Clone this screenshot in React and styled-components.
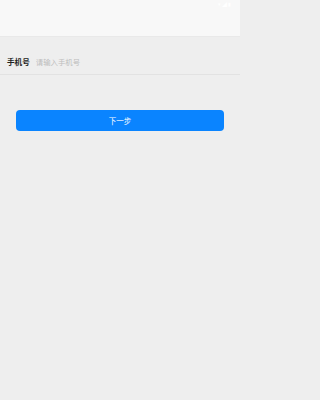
import React from "react";
import styled, { createGlobalStyle } from "styled-components";

const Global = createGlobalStyle`
  html, body { margin: 0; padding: 0; background: #eeeeee; }
  body { font-family: "Noto Sans CJK SC", "Noto Sans", sans-serif; }
  #root { min-height: 400px; }
`;

const Page = styled.div`
  width: 240px;
  min-height: 400px;
  background: #eeeeee;
  display: flex;
  flex-direction: column;
`;

const Header = styled.div`
  height: 37px;
  background: #f8f8f8;
  border-bottom: 1px solid #e9e9e9;
  box-sizing: border-box;
  display: flex;
  justify-content: flex-end;
  align-items: flex-start;
  padding: 1px 8px 0 0;
`;

const Status = styled.span`
  color: #ffffff;
  font-size: 5px;
  line-height: 6px;
  letter-spacing: 1px;
`;

const Row = styled.div`
  margin-top: 12px;
  height: 25px;
  display: flex;
  align-items: center;
  padding: 0 7px;
  border-bottom: 1px solid #e2e2e2;
  gap: 6px;
`;

const Label = styled.span`
  font-size: 7.6px;
  font-weight: 700;
  color: #222222;
  line-height: 1;
`;

const Input = styled.input`
  flex: 1;
  border: none;
  outline: none;
  background: transparent;
  padding: 0;
  font-family: "Noto Sans CJK SC", sans-serif;
  font-size: 7.4px;
  color: #333;
  &::placeholder { color: #bdbdbd; }
`;

const Button = styled.button`
  margin: 35px 16px 0;
  height: 21px;
  border: none;
  border-radius: 4px;
  background: #0a84ff;
  color: #ffffff;
  font-family: "Noto Sans CJK SC", sans-serif;
  font-size: 7.5px;
  padding: 0;
`;

export default function App() {
  return (
    <>
      <Global />
      <Page>
        <Header>
          <Status>▾◢▮</Status>
        </Header>
        <Row>
          <Label>手机号</Label>
          <Input placeholder="请输入手机号" />
        </Row>
        <Button>下一步</Button>
      </Page>
    </>
  );
}
